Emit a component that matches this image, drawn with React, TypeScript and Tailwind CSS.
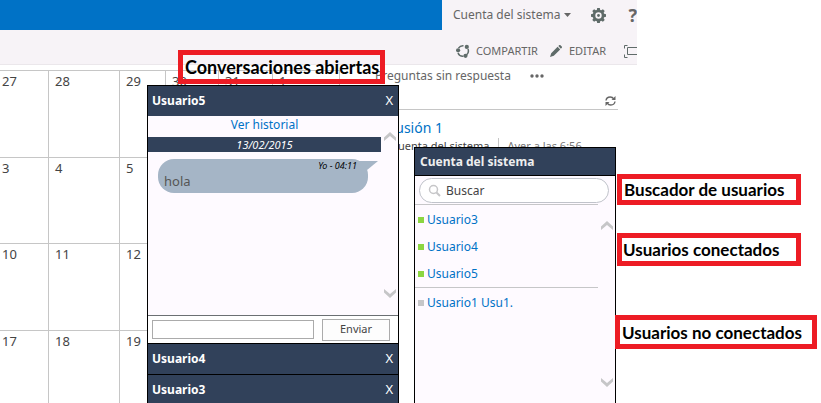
import React from 'react';
import { clsx } from 'clsx';

const weeks = [
  ['27', '28', '29', '30', '31', '1'],
  ['3', '4', '5', '6', '7', '8'],
  ['10', '11', '12', '13', '14', '15'],
  ['17', '18', '19', '20', '21', '22'],
];

const columnWidths = [
  'w-[49px]',
  'w-[71px]',
  'w-[46px]',
  'w-[53px]',
  'w-[54px]',
  'w-[67px]',
];

const connectedUsers = ['Usuario3', 'Usuario4', 'Usuario5'];
const disconnectedUsers = ['Usuario1 Usu1.'];

const ShareIcon = () => (
  <svg width="14" height="14" viewBox="0 0 14 14" fill="none">
    <path
      d="M2.500 4.200A5.300 5.300 0 0 1 7.500 1.700M12 5a5.300 5.300 0 0 1-1.300 5.800M7.500 12.300A5.300 5.300 0 0 1 2 9"
      stroke="#5f6b69"
      strokeWidth="1.500"
    />
    <circle cx="10.800" cy="2.900" r="2.100" fill="#5f6b69" />
    <circle cx="2.100" cy="6.300" r="2.100" fill="#5f6b69" />
    <circle cx="9.500" cy="11.800" r="2.100" fill="#5f6b69" />
  </svg>
);

const GearIcon = () => (
  <svg width="15" height="15" viewBox="0 0 16 16">
    <path
      fillRule="evenodd"
      fill="#5f6b69"
      d="M6.6 0h2.8l.4 2 1.2.5L12.700 1.400l1.900 1.900L13.500 5l.5 1.200 2 .4v2.800l-2 .4-.5 1.200 1.100 1.700-1.900 1.900L11 13.500l-1.200.5-.4 2H6.600l-.4-2L5 13.500l-1.700 1.100-1.900-1.900L2.500 11 2 9.800l-2-.4V6.600l2-.4L2.500 5 1.400 3.300l1.900-1.900L5 2.500 6.200 2zM8 4.600a3.400 3.400 0 1 0 0 6.800 3.400 3.400 0 0 0 0-6.800z"
    />
    <circle cx="8" cy="8" r="1.500" fill="#5f6b69" />
  </svg>
);

const PencilIcon = () => (
  <svg width="12" height="12" viewBox="0 0 12 12" fill="#5f6b69">
    <path d="M0 12l1.200-3.800L7.600 1.800l2.600 2.600-6.400 6.400zM8.300 1.100L9.400 0h.8L12 1.800v.8l-1.100 1.100z" />
  </svg>
);

const FocusIcon = () => (
  <svg width="18" height="13" viewBox="0 0 18 13" fill="none" stroke="#5f6b69">
    <path d="M.5 3.500v-3h3M.5 9.500v3h3M14.500.5h3v3M14.500 12.500h3v-3M3.500 2.500h11v7h-11z" />
  </svg>
);

const RefreshIcon = () => (
  <svg width="11" height="10" viewBox="0 0 11 10" fill="none">
    <path
      d="M1 4.500C1.300 2.400 3 1 5.200 1c1.500 0 2.800.7 3.500 1.900M10 5.500C9.700 7.600 8 9 5.800 9 4.300 9 3 8.300 2.300 7.100"
      stroke="#666"
      strokeWidth="1.400"
    />
    <path d="M10.500 0v4h-4zM.5 10V6h4z" fill="#666" />
  </svg>
);

const Chevron: React.FC<{ down?: boolean }> = ({ down }) => (
  <svg
    width="12"
    height="9"
    viewBox="0 0 12 9"
    className={clsx('block', down && 'rotate-180')}
  >
    <path d="M6 0l6 5.500V9L6 4 0 9V5.500z" fill="#c6c6c8" />
  </svg>
);

const ScrollArrows: React.FC<{ className?: string }> = ({ className }) => (
  <div className={clsx('flex flex-col justify-between', className)}>
    <button type="button" aria-label="Subir">
      <Chevron />
    </button>
    <button type="button" aria-label="Bajar">
      <Chevron down />
    </button>
  </div>
);

const ChatHeader: React.FC<{ name: string }> = ({ name }) => (
  <div className="flex h-[30px] shrink-0 items-center justify-between bg-[#31415a] px-1 pr-[5px] text-white">
    <h2 className="text-xs font-bold">{name}</h2>
    <button type="button" aria-label={`Cerrar ${name}`} className="text-[13px]">
      X
    </button>
  </div>
);

const ChatDock = () => (
  <section className="absolute bottom-0 left-[147px] top-[85px] flex w-[252px] flex-col overflow-hidden border border-b-0 border-black bg-white">
    <ChatHeader name="Usuario5" />
    <div className="flex h-[199px] shrink-0 bg-[#fefaff]">
      <div className="w-[233px]">
        <a
          href="#historial"
          className="block h-[21px] text-center text-xs leading-[18px] text-[#0072c6]"
        >
          Ver historial
        </a>
        <div className="h-[15px] bg-[#31415a] text-center text-[11px] italic leading-[15px] text-white">
          13/02/2015
        </div>
        <div className="relative ml-[10px] mt-[7px] h-[34px] w-[210px] rounded-[16px] bg-[#a5b5c6]">
          <svg
            width="20"
            height="12"
            viewBox="0 0 20 12"
            className="absolute left-[200px] top-[2px]"
          >
            <path d="M0 0h20L9 9 4 12z" fill="#a5b5c6" />
          </svg>
          <div className="pr-[11px] text-right text-[9px] italic leading-[14px] text-black">
            Yo - 04:11
          </div>
          <p className="pl-[6px] text-[13px] leading-4 text-[#555]">hola</p>
        </div>
      </div>
      <ScrollArrows className="ml-[3px] pb-[17px] pt-4" />
    </div>
    <form className="flex h-7 shrink-0 items-center border-t border-[#6b6f73] pl-1">
      <input
        type="text"
        aria-label="Mensaje"
        className="h-[19px] w-[162px] border border-[#ababab] bg-white px-1 text-xs"
      />
      <button
        type="button"
        className="ml-2 h-[22px] w-[68px] border border-[#ababab] bg-[#fdfdfd] text-[11px] text-[#444]"
      >
        Enviar
      </button>
    </form>
    <div className="border-t border-black">
      <ChatHeader name="Usuario4" />
    </div>
    <div className="border-t border-black">
      <ChatHeader name="Usuario3" />
    </div>
  </section>
);

const UserItem: React.FC<{ name: string; connected?: boolean }> = ({
  name,
  connected,
}) => (
  <li className="flex h-[27px] items-center gap-[3px] pl-[3px]">
    <span
      className={clsx(
        'size-[6px]',
        connected ? 'bg-[#8cd641]' : 'bg-[#c6c6c8]'
      )}
    />
    <a href="#chat" className="text-xs text-[#0072c6]">
      {name}
    </a>
  </li>
);

const UsersPanel = () => (
  <section className="absolute bottom-0 left-[414px] top-[147px] flex w-[202px] flex-col border border-b-0 border-black bg-[#fefaff]">
    <h2 className="h-7 shrink-0 border-b border-black bg-[#31415a] pl-[5px] text-xs font-bold leading-7 text-[#eee]">
      Cuenta del sistema
    </h2>
    <label className="mx-1 mt-[2px] flex h-[25px] w-[190px] shrink-0 items-center gap-[5px] rounded-full border border-[#c0c3ca] bg-white pl-2">
      <svg width="13" height="13" viewBox="0 0 13 13" fill="none" stroke="#c6c6c8">
        <circle cx="5.500" cy="5.500" r="4" strokeWidth="1.500" />
        <path d="M8.500 8.500l3.500 3.500" strokeWidth="2" />
      </svg>
      <input
        type="text"
        placeholder="Buscar"
        aria-label="Buscar"
        className="w-[150px] text-xs outline-none placeholder:text-[#444]"
      />
    </label>
    <div className="flex flex-1">
      <div className="mt-px w-[183px]">
        <ul className="h-[84px] border-b border-t border-[#c6c6c8] pt-px">
          {connectedUsers.map((name) => (
            <UserItem key={name} name={name} connected />
          ))}
        </ul>
        <ul className="pt-px">
          {disconnectedUsers.map((name) => (
            <UserItem key={name} name={name} />
          ))}
        </ul>
      </div>
      <ScrollArrows className="ml-[3px] pb-4 pt-[18px]" />
    </div>
  </section>
);

const Callout: React.FC<{ text: string; className: string }> = ({
  text,
  className,
}) => (
  <div
    className={clsx(
      "absolute flex items-center whitespace-nowrap border-[5px] border-[#ed1c24] font-['Lato','Liberation_Sans',sans-serif] font-bold leading-none text-black",
      className
    )}
  >
    {text}
  </div>
);

export default function App() {
  return (
    <div className="relative flex h-screen overflow-hidden bg-white font-['Noto_Sans','Open_Sans',sans-serif] text-[#444]">
      <main className="min-w-0 flex-1 overflow-hidden">
        <header className="border-b border-[#ebe7eb] bg-[#f7f3f7]">
          <div className="flex h-[30px]">
            <div className="flex-1 bg-[#0072c6]" />
            <div className="flex w-[195px] items-center overflow-hidden pl-[11px] text-[#666]">
              <button
                type="button"
                className="flex shrink-0 items-center gap-1 text-xs"
              >
                Cuenta del sistema
                <svg width="7" height="4" viewBox="0 0 7 4">
                  <path d="M0 0h7L3.500 4z" fill="#666" />
                </svg>
              </button>
              <button type="button" aria-label="Configuración" className="ml-5 shrink-0">
                <GearIcon />
              </button>
              <button
                type="button"
                aria-label="Ayuda"
                className="ml-[22px] shrink-0 text-lg font-bold leading-none"
              >
                ?
              </button>
            </div>
          </div>
          <div className="flex h-[34px] pt-1">
            <div className="flex-1" />
            <div className="flex w-[181px] items-center overflow-hidden pt-1 text-[11px] text-[#666]">
              <button type="button" className="flex shrink-0 items-center gap-[6px]">
                <ShareIcon />
                COMPARTIR
              </button>
              <button
                type="button"
                className="ml-3 flex shrink-0 items-center gap-[7px]"
              >
                <PencilIcon />
                EDITAR
              </button>
              <button type="button" aria-label="Enfocar" className="ml-[18px] shrink-0">
                <FocusIcon />
              </button>
            </div>
          </div>
        </header>

        <div className="flex pt-[5px]">
          <table className="w-[340px] shrink-0 table-fixed border-separate border-spacing-0 border-t border-[#c6c6c6] text-[13px]">
            <tbody>
              {weeks.map((week, weekIndex) => (
                <tr
                  key={weekIndex}
                  className={weekIndex === 1 ? 'h-[86px]' : 'h-[87px]'}
                >
                  {week.map((day, dayIndex) => (
                    <td
                      key={day}
                      className={clsx(
                        'border-b border-r border-[#c6c6c6] align-top leading-5',
                        columnWidths[dayIndex],
                        dayIndex === 0 ? 'pl-[2px]' : 'pl-[6px]'
                      )}
                    >
                      {day}
                    </td>
                  ))}
                </tr>
              ))}
            </tbody>
          </table>

          <div className="ml-7 w-[250px] shrink-0">
            <div className="flex items-center pl-[7px] text-xs leading-3 text-[#666]">
              <span className="w-[155px]">Preguntas sin respuesta</span>
              <button type="button" aria-label="Más opciones">
                <svg width="14" height="4" viewBox="0 0 14 4" fill="#666">
                  <circle cx="2" cy="2" r="1.700" />
                  <circle cx="7" cy="2" r="1.700" />
                  <circle cx="12" cy="2" r="1.700" />
                </svg>
              </button>
            </div>
            <div className="flex h-7 items-end justify-end border-b border-[#c6c6c6] pb-[3px] pr-[2px]">
              <button type="button" aria-label="Actualizar">
                <RefreshIcon />
              </button>
            </div>
            <a
              href="#discusion"
              className="mt-2 block text-sm leading-5 text-[#0072c6]"
            >
              Discusión 1
            </a>
            <div className="flex pl-[23px] text-[11px] leading-4">
              <span className="border-r border-[#c6c6c6] pr-[9px]">
                Cuenta del sistema
              </span>
              <span className="pl-2 text-[#777]">Ayer a las 6:56</span>
            </div>
          </div>
        </div>
      </main>
      <aside className="w-[184px] shrink-0" />

      <Callout
        text="Conversaciones abiertas"
        className="left-[178px] top-[50px] h-[34px] w-[207px] pl-[2px] text-lg leading-none"
      />
      <ChatDock />
      <UsersPanel />
      <Callout
        text="Buscador de usuarios"
        className="left-[617px] top-[174px] h-[31px] w-[184px] pl-[2px] text-[17px]"
      />
      <Callout
        text="Usuarios conectados"
        className="left-[617px] top-[233px] h-[33px] w-[184px] pl-px text-[17px]"
      />
      <Callout
        text="Usuarios no conectados"
        className="left-[615px] top-[315px] h-[34px] w-[202px] pl-[2px] text-[17px]"
      />
    </div>
  );
}
